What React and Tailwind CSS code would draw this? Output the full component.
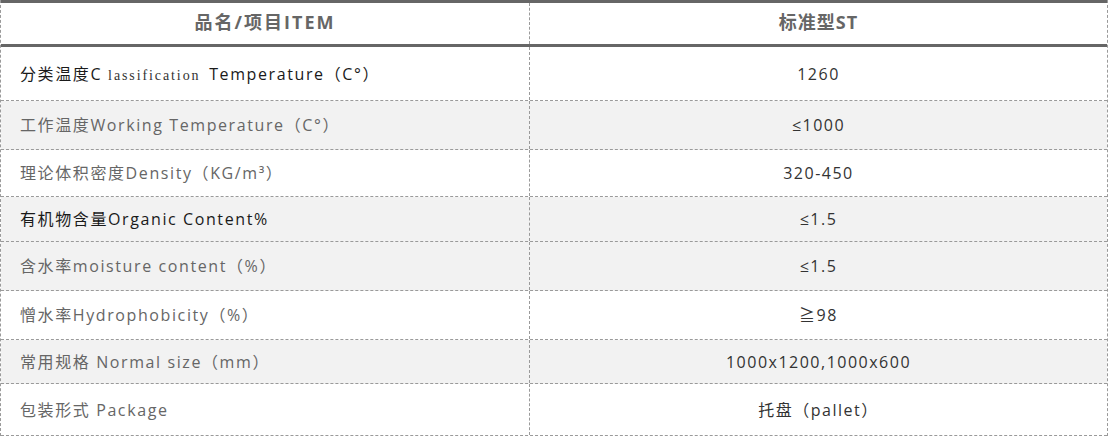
import React from "react";

const rows = [
  { h: "h-[54px]", bg: "bg-white", dark: true, left: (
    <>
      分类温度C<span className="ml-[6px] mr-[3px] font-['Liberation_Serif'] text-[14px] tracking-[1.9px] text-[#333]">lassification</span> Temperature（C°）
    </>
  ), right: "1260" },
  { h: "h-[49px]", bg: "bg-[#f2f2f2]", left: "工作温度Working Temperature（C°）", right: "≤1000" },
  { h: "h-[47px]", bg: "bg-white", left: "理论体积密度Density（KG/m³）", right: "320-450" },
  { h: "h-[45px]", bg: "bg-[#f2f2f2]", dark: true, left: "有机物含量Organic Content%", right: "≤1.5" },
  { h: "h-[49px]", bg: "bg-[#f2f2f2]", left: "含水率moisture content（%）", right: "≤1.5" },
  { h: "h-[49px]", bg: "bg-white", left: "憎水率Hydrophobicity（%）", right: "≧98" },
  { h: "h-[44px]", bg: "bg-[#f2f2f2]", left: "常用规格 Normal size（mm）", right: "1000x1200,1000x600" },
  { h: "h-[52px]", bg: "bg-white", left: "包装形式 Package", right: "托盘（pallet）" },
];

export default function App() {
  return (
    <div className="w-[1108px] h-[437px] bg-white font-['Open_Sans','Noto_Sans_CJK_SC',sans-serif]">
      <div className="w-[1108px] border-x border-dashed border-[#9a9a9a]">
        <div className="grid grid-cols-[528px_1fr] h-[47px] border-y-[3px] border-[#666] border-solid bg-white">
          <div className="flex items-center justify-center pb-[2px] text-[18px] font-bold text-[#666] tracking-[2px]">品名/项目ITEM</div>
          <div className="flex items-center justify-center pb-[2px] text-[18px] font-bold text-[#666] tracking-[1px] border-l border-dashed border-[#9a9a9a]">标准型ST</div>
        </div>
        {rows.map((r, i) => (
          <div key={i} className={`grid grid-cols-[528px_1fr] ${r.h} ${r.bg} border-b border-dashed border-[#9a9a9a]`}>
            <div className={`flex items-center pl-[19px] text-[16px] tracking-[1.6px] ${r.dark ? "text-[#1a1a1a]" : "text-[#666]"}`}>
              <span>{r.left}</span>
            </div>
            <div className="flex items-center justify-center text-[16px] tracking-[1.5px] text-[#333] border-l border-dashed border-[#9a9a9a]">{r.right}</div>
          </div>
        ))}
      </div>
    </div>
  );
}
